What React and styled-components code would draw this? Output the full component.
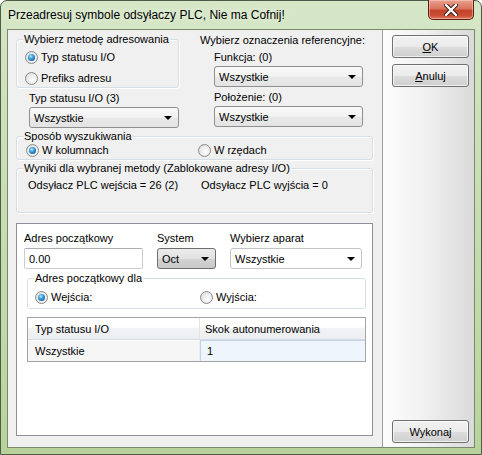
import React from 'react';
import styled, { createGlobalStyle, css } from 'styled-components';

const Global = createGlobalStyle`
  html, body { margin: 0; padding: 0; background: #fff; }
  body {
    font-family: "Liberation Sans", Arial, sans-serif;
    font-size: 11px;
    color: #000;
  }
  * { box-sizing: border-box; }
`;

const Window = styled.div`
  width: 482px;
  height: 455px;
  display: flex;
  flex-direction: column;
  padding: 0 6px 6px 6px;
  border: 1px solid #4f5a4a;
  border-radius: 7px 7px 0 0;
  background: linear-gradient(180deg, #d6e7c7 0%, #cce1b9 25%, #c1daa8 70%, #b7d39b 100%);
`;

const TitleBar = styled.div`
  height: 28px;
  display: flex;
  align-items: flex-start;
  justify-content: space-between;
  padding-left: 1px;
`;

const Title = styled.div`
  margin-top: 7px;
  font-size: 12px;
  line-height: 15px;
  text-shadow: 0 0 6px rgba(255, 255, 255, 0.9);
`;

const CloseButton = styled.div`
  width: 46px;
  height: 20px;
  margin: -1px 1px 0 0;
  border: 1px solid #5a2014;
  border-top: none;
  border-radius: 0 0 5px 5px;
  background: linear-gradient(180deg, #e9a28f 0%, #d9745d 45%, #c4442b 55%, #c94c32 80%, #e07a5c 100%);
  box-shadow: inset 0 0 0 1px rgba(255, 220, 210, 0.45);
  display: flex;
  align-items: center;
  justify-content: center;
`;

const Client = styled.div`
  flex: 1;
  display: flex;
  border: 1px solid #7b8870;
  background: #f0f0f0;
`;

const LeftPanel = styled.div`
  width: 374px;
  display: flex;
  flex-direction: column;
  padding: 0 9px 0 8px;
`;

const RightPanel = styled.div`
  flex: 1;
  display: flex;
  flex-direction: column;
  gap: 6px;
  padding: 5px 0 4px 9px;
  border-left: 1px solid #a0a0a0;
  background: linear-gradient(90deg, #fdfdfd 0%, #f1f1f1 45%, #dadada 100%);
`;

const Button = styled.div`
  width: 77px;
  height: 23px;
  display: flex;
  align-items: center;
  justify-content: center;
  border: 1px solid #707070;
  border-radius: 3px;
  background: linear-gradient(180deg, #f2f2f2 0%, #ebebeb 50%, #dddddd 51%, #cfcfcf 100%);
  box-shadow: inset 0 0 0 1px rgba(255, 255, 255, 0.7);
  ${(p) => p.$bottom && css`margin-top: auto;`}
`;

const TopGrid = styled.div`
  display: grid;
  grid-template-columns: 163px 1fr;
  column-gap: 21px;
`;

const Column = styled.div`
  display: flex;
  flex-direction: column;
  padding-top: ${(p) => p.$pt || 0}px;
`;

const GroupBox = styled.div`
  position: relative;
  margin: ${(p) => p.$margin || '0'};
  padding: ${(p) => p.$padding || '0'};
  border: 1px solid #d5dfe5;
  border-radius: 3px;
  box-shadow: inset 1px 1px 0 #fff, 1px 1px 0 #fff;
`;

const Legend = styled.span`
  position: absolute;
  top: -7px;
  left: 6px;
  line-height: 13px;
  padding: 0 1px;
  background: ${(p) => (p.$white ? '#fff' : '#f0f0f0')};
`;

const RadioList = styled.div`
  display: flex;
  flex-direction: column;
  gap: 5px;
`;

const RadioRow = styled.div`
  display: grid;
  grid-template-columns: ${(p) => p.$cols || '1fr'};
`;

const RadioItem = styled.label`
  height: 16px;
  display: flex;
  align-items: center;
  gap: 3px;
  line-height: 13px;
`;

const RadioCircle = styled.span`
  width: 13px;
  height: 13px;
  border-radius: 50%;
  border: 1px solid #8a8a8a;
  background: radial-gradient(circle at 60% 60%, #ffffff 0%, #f0f0f0 40%, #d4d4d4 100%);
  display: flex;
  align-items: center;
  justify-content: center;
  flex: none;
  &::after {
    content: '';
    display: ${(p) => (p.$checked ? 'block' : 'none')};
    width: 7px;
    height: 7px;
    border-radius: 50%;
    background: radial-gradient(circle at 40% 35%, #b9ecff 0%, #3fa6e0 35%, #145a9c 80%, #0c3f78 100%);
  }
`;

const Label = styled.div`
  line-height: 13px;
  margin: ${(p) => p.$margin || '0'};
`;

const SelectBox = styled.div`
  height: 21px;
  width: ${(p) => p.$width || 'auto'};
  margin: ${(p) => p.$margin || '0'};
  display: flex;
  align-items: center;
  justify-content: space-between;
  padding: 0 6px 0 4px;
  border-radius: 3px;
  ${(p) =>
    p.$variant === 'white'
      ? css`
          border: 1px solid #c2c4c8;
          background: #fff;
        `
      : p.$variant === 'dark'
      ? css`
          border: 1px solid #6e6e6e;
          background: linear-gradient(180deg, #ececec 0%, #e2e2e2 50%, #d3d3d3 51%, #c9c9c9 100%);
        `
      : css`
          border: 1px solid #8e8f8f;
          background: linear-gradient(180deg, #fafafa 0%, #f1f1f1 50%, #e9e9e9 51%, #e3e3e3 100%);
        `}
`;

const Arrow = styled.span`
  width: 0;
  height: 0;
  border-left: 4px solid transparent;
  border-right: 4px solid transparent;
  border-top: 4px solid #000;
`;

const Results = styled.div`
  display: grid;
  grid-template-columns: 173px 1fr;
  line-height: 16px;
`;

const WhitePanel = styled.div`
  flex: 1;
  margin: 10px 0 11px 0;
  padding: 8px 6px 0 7px;
  border: 1px solid #8d9096;
  background: #fff;
  display: flex;
  flex-direction: column;
`;

const FieldsRow = styled.div`
  display: flex;
  gap: 14px;
`;

const Field = styled.div`
  width: ${(p) => p.$width}px;
  display: flex;
  flex-direction: column;
  gap: 3px;
`;

const TextInput = styled.div`
  height: 21px;
  display: flex;
  align-items: center;
  padding: 0 4px;
  border: 1px solid #c9ccd1;
  border-top-color: #abadb3;
  border-radius: 2px;
  background: #fff;
`;

const Table = styled.div`
  margin: 8px 0 0 3px;
  display: grid;
  grid-template-columns: 172px 1fr;
  border: 1px solid #a3a3a3;
`;

const HeadCell = styled.div`
  height: 22px;
  display: flex;
  align-items: center;
  padding-left: ${(p) => p.$pl}px;
  background: linear-gradient(180deg, #ffffff 0%, #ffffff 45%, #f2f3f5 46%, #eceef1 100%);
  border-bottom: 1px solid #d5dae1;
  ${(p) => p.$divider && css`border-right: 1px solid #e3e4e6;`}
`;

const DataCell = styled.div`
  height: 21px;
  display: flex;
  align-items: center;
  padding-left: ${(p) => p.$pl}px;
  ${(p) =>
    p.$active
      ? css`
          background: #eef5fd;
          border-top: 1px solid #c3d6ee;
          border-left: 1px solid #bcd2ee;
        `
      : css`
          background: #f6f6f6;
          border-top: 1px solid #fff;
          border-right: 1px solid #ececec;
        `}
`;

const U = styled.span`
  text-decoration: underline;
`;

function Radio({ checked, children }) {
  return (
    <RadioItem>
      <RadioCircle $checked={checked} />
      <span>{children}</span>
    </RadioItem>
  );
}

function Select({ value, variant, width, margin }) {
  return (
    <SelectBox $variant={variant} $width={width} $margin={margin}>
      <span>{value}</span>
      <Arrow />
    </SelectBox>
  );
}

function CloseGlyph() {
  return (
    <svg width="14" height="12" viewBox="0 0 14 12">
      <path
        d="M2 1 L12 11 M12 1 L2 11"
        stroke="#3a1a14"
        strokeWidth="4.2"
        strokeLinecap="round"
      />
      <path
        d="M2 1 L12 11 M12 1 L2 11"
        stroke="#ffffff"
        strokeWidth="2.4"
        strokeLinecap="round"
      />
    </svg>
  );
}

export default function App() {
  return (
    <>
      <Global />
      <Window>
        <TitleBar>
          <Title>Przeadresuj symbole odsyłaczy PLC, Nie ma Cofnij!</Title>
          <CloseButton>
            <CloseGlyph />
          </CloseButton>
        </TitleBar>
        <Client>
          <LeftPanel>
            <TopGrid>
              <Column>
                <GroupBox $margin="9px 0 0 0" $padding="9px 0 1px 8px">
                  <Legend>Wybierz metodę adresowania</Legend>
                  <RadioList>
                    <Radio checked>Typ statusu I/O</Radio>
                    <Radio>Prefiks adresu</Radio>
                  </RadioList>
                </GroupBox>
                <Label $margin="4px 0 0 13px">Typ statusu I/O (3)</Label>
                <Select value="Wszystkie" margin="2px 0 0 13px" />
              </Column>
              <Column $pt={4}>
                <Label>Wybierz oznaczenia referencyjne:</Label>
                <Label $margin="4px 0 0 14px">Funkcja: (0)</Label>
                <Select value="Wszystkie" width="149px" margin="2px 0 0 14px" />
                <Label $margin="4px 0 0 14px">Położenie: (0)</Label>
                <Select value="Wszystkie" width="149px" margin="2px 0 0 14px" />
              </Column>
            </TopGrid>

            <GroupBox $margin="8px 0 0 0" $padding="5px 0 1px 9px">
              <Legend>Sposób wyszukiwania</Legend>
              <RadioRow $cols="172px 1fr">
                <Radio checked>W kolumnach</Radio>
                <Radio>W rzędach</Radio>
              </RadioRow>
            </GroupBox>

            <GroupBox $margin="8px 0 0 0" $padding="8px 0 19px 11px">
              <Legend>Wyniki dla wybranej metody (Zablokowane adresy I/O)</Legend>
              <Results>
                <span>Odsyłacz PLC wejścia = 26 (2)</span>
                <span>Odsyłacz PLC wyjścia = 0</span>
              </Results>
            </GroupBox>

            <WhitePanel>
              <FieldsRow>
                <Field $width={119}>
                  <Label>Adres początkowy</Label>
                  <TextInput>0.00</TextInput>
                </Field>
                <Field $width={59}>
                  <Label>System</Label>
                  <Select value="Oct" variant="dark" />
                </Field>
                <Field $width={132}>
                  <Label>Wybierz aparat</Label>
                  <Select value="Wszystkie" variant="white" />
                </Field>
              </FieldsRow>

              <GroupBox $margin="9px 0 0 3px" $padding="10px 0 3px 7px">
                <Legend $white>Adres początkowy dla</Legend>
                <RadioRow $cols="165px 1fr">
                  <Radio checked>Wejścia:</Radio>
                  <Radio>Wyjścia:</Radio>
                </RadioRow>
              </GroupBox>

              <Table>
                <HeadCell $pl={7} $divider>Typ statusu I/O</HeadCell>
                <HeadCell $pl={5}>Skok autonumerowania</HeadCell>
                <DataCell $pl={7}>Wszystkie</DataCell>
                <DataCell $pl={6} $active>1</DataCell>
              </Table>
            </WhitePanel>
          </LeftPanel>

          <RightPanel>
            <Button>
              <U>O</U>K
            </Button>
            <Button>
              <U>A</U>nuluj
            </Button>
            <Button $bottom>Wykonaj</Button>
          </RightPanel>
        </Client>
      </Window>
    </>
  );
}
